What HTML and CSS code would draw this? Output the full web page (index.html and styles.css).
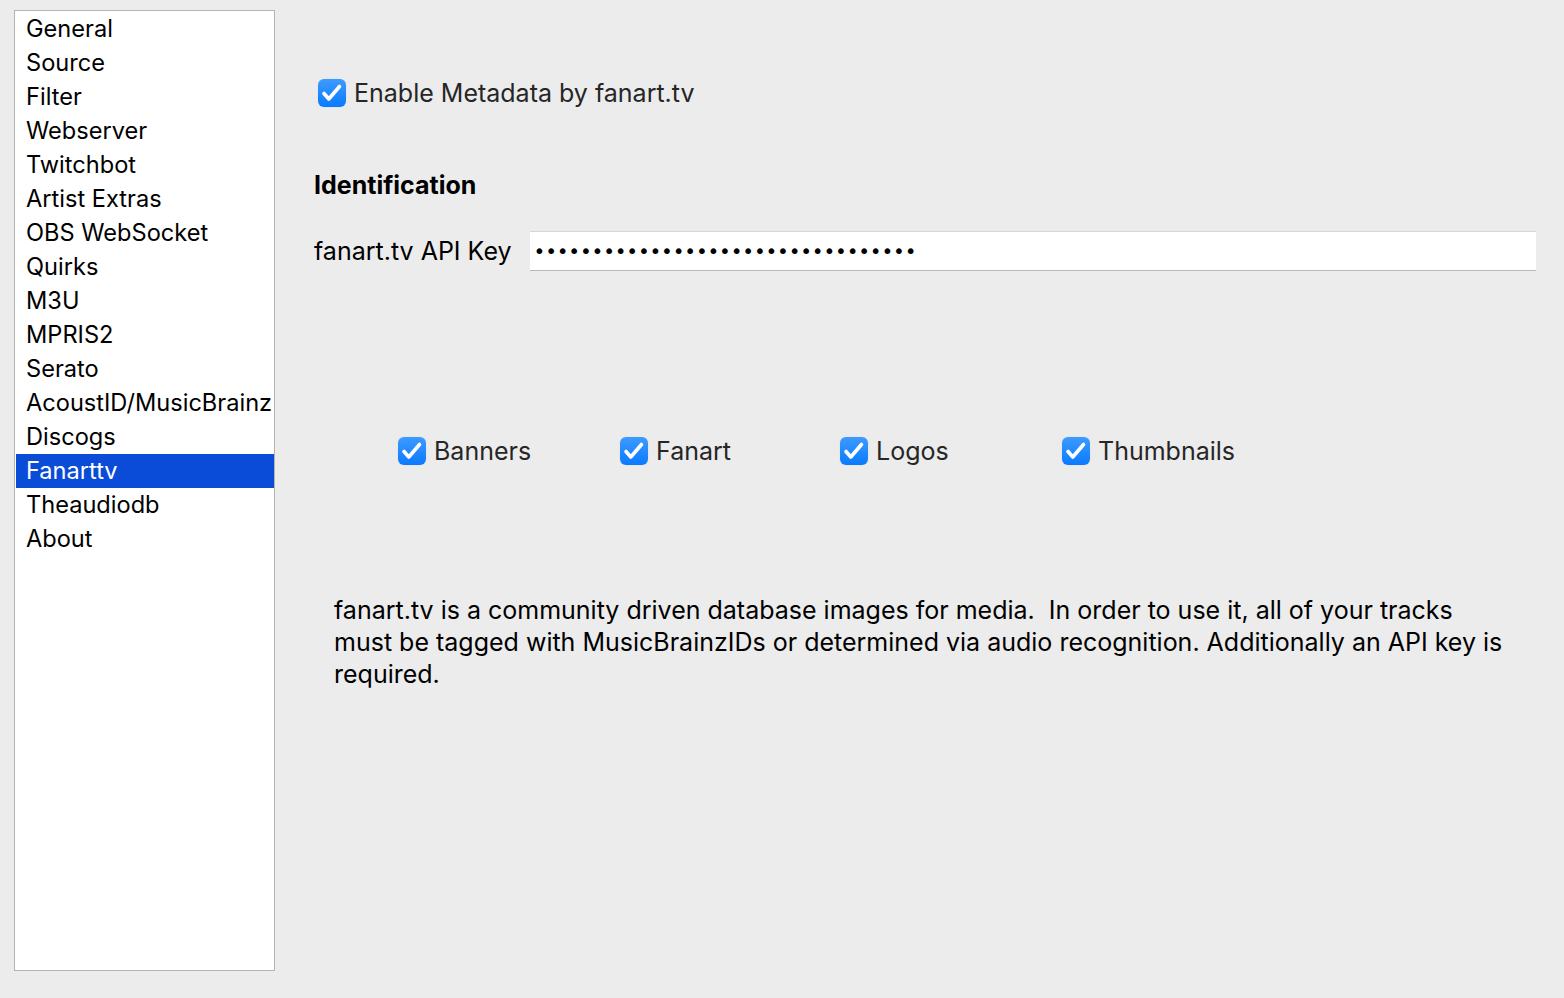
FILE: index.html
```html
<!DOCTYPE html>
<html>
<head>
<meta charset="utf-8">
<link rel="stylesheet" href="styles.css">
</head>
<body>
<div class="window">
  <ul class="sidebar">
    <li>General</li>
    <li>Source</li>
    <li>Filter</li>
    <li>Webserver</li>
    <li>Twitchbot</li>
    <li>Artist Extras</li>
    <li>OBS WebSocket</li>
    <li>Quirks</li>
    <li>M3U</li>
    <li>MPRIS2</li>
    <li>Serato</li>
    <li>AcoustID/MusicBrainz</li>
    <li>Discogs</li>
    <li class="selected">Fanarttv</li>
    <li>Theaudiodb</li>
    <li>About</li>
  </ul>
  <div class="content">
    <label class="check enable">
      <span class="box"><svg viewBox="0 0 28 28" width="28" height="28"><path d="M6 14.5 L10.8 20 L21.5 7.5" fill="none" stroke="#fff" stroke-width="3.6" stroke-linecap="round" stroke-linejoin="round"/></svg></span>
      <span>Enable Metadata by fanart.tv</span>
    </label>
    <h2 class="section">Identification</h2>
    <div class="field">
      <span class="field-label">fanart.tv API Key</span>
      <div class="input">•••••••••••••••••••••••••••••••••</div>
    </div>
    <div class="options">
      <label class="check opt">
        <span class="box"><svg viewBox="0 0 28 28" width="28" height="28"><path d="M6 14.5 L10.8 20 L21.5 7.5" fill="none" stroke="#fff" stroke-width="3.6" stroke-linecap="round" stroke-linejoin="round"/></svg></span>
        <span>Banners</span>
      </label>
      <label class="check opt">
        <span class="box"><svg viewBox="0 0 28 28" width="28" height="28"><path d="M6 14.5 L10.8 20 L21.5 7.5" fill="none" stroke="#fff" stroke-width="3.6" stroke-linecap="round" stroke-linejoin="round"/></svg></span>
        <span>Fanart</span>
      </label>
      <label class="check opt">
        <span class="box"><svg viewBox="0 0 28 28" width="28" height="28"><path d="M6 14.5 L10.8 20 L21.5 7.5" fill="none" stroke="#fff" stroke-width="3.6" stroke-linecap="round" stroke-linejoin="round"/></svg></span>
        <span>Logos</span>
      </label>
      <label class="check opt">
        <span class="box"><svg viewBox="0 0 28 28" width="28" height="28"><path d="M6 14.5 L10.8 20 L21.5 7.5" fill="none" stroke="#fff" stroke-width="3.6" stroke-linecap="round" stroke-linejoin="round"/></svg></span>
        <span>Thumbnails</span>
      </label>
    </div>
    <p class="desc">fanart.tv is a community driven database images for media.&nbsp; In order to use it, all of your tracks must be tagged with MusicBrainzIDs or determined via audio recognition. Additionally an API key is required.</p>
  </div>
</div>
</body>
</html>
```

FILE: styles.css
```css
html, body {
  margin: 0;
  padding: 0;
  background: #ececec;
}
body {
  font-family: Inter, "Noto Sans", "Liberation Sans", sans-serif;
  color: #1a1a1a;
  font-size: 25px;
}
.window {
  display: flex;
  padding: 10px 0 0 14px;
  height: 988px;
  box-sizing: border-box;
}
.sidebar {
  list-style: none;
  margin: 0;
  padding: 1px 0 0 1px;
  width: 258px;
  height: 958px;
  background: #fff;
  border: 1px solid #b4b4b4;
  flex: none;
  box-sizing: content-box;
  font-size: 23.6px;
}
.sidebar li {
  height: 34px;
  line-height: 34px;
  padding-left: 10px;
  color: #000;
  white-space: nowrap;
  overflow: hidden;
}
.sidebar li.selected {
  background: #0a4bd8;
  color: #fff;
}
.content {
  flex: 1;
  padding: 58px 28px 0 39px;
}
.check {
  display: flex;
  align-items: center;
  gap: 8px;
  color: #262626;
}
.box {
  width: 28px;
  height: 28px;
  border-radius: 6px;
  background: linear-gradient(#3d9bff, #0a7aff);
  display: flex;
  align-items: center;
  justify-content: center;
  flex: none;
  box-shadow: 0 0 1px rgba(0,0,0,0.2);
}
.box svg { display: block; }
.enable {
  margin-left: 4px;
  height: 50px;
}
.section {
  font-size: 25px;
  font-weight: 700;
  margin: 50px 0 0 0;
  height: 34px;
  line-height: 34px;
  color: #000;
}
.field {
  display: flex;
  align-items: center;
  margin-top: 29px;
  gap: 18px;
}
.field-label {
  color: #000;
}
.input {
  flex: 1;
  height: 38px;
  background: #fff;
  border-top: 1px solid #d6d6d6;
  border-bottom: 1px solid #b8b8b8;
  font-family: "DejaVu Sans", sans-serif;
  font-size: 20px;
  letter-spacing: -0.2px;
  line-height: 38px;
  padding-left: 4px;
  color: #000;
  overflow: hidden;
  white-space: nowrap;
}
.options {
  display: grid;
  grid-template-columns: 222px 220px 222px 222px;
  margin: 160px 0 0 84px;
  height: 40px;
}
.desc {
  margin: 123px 21px 0 20px;
  line-height: 32px;
  color: #000;
}
```
